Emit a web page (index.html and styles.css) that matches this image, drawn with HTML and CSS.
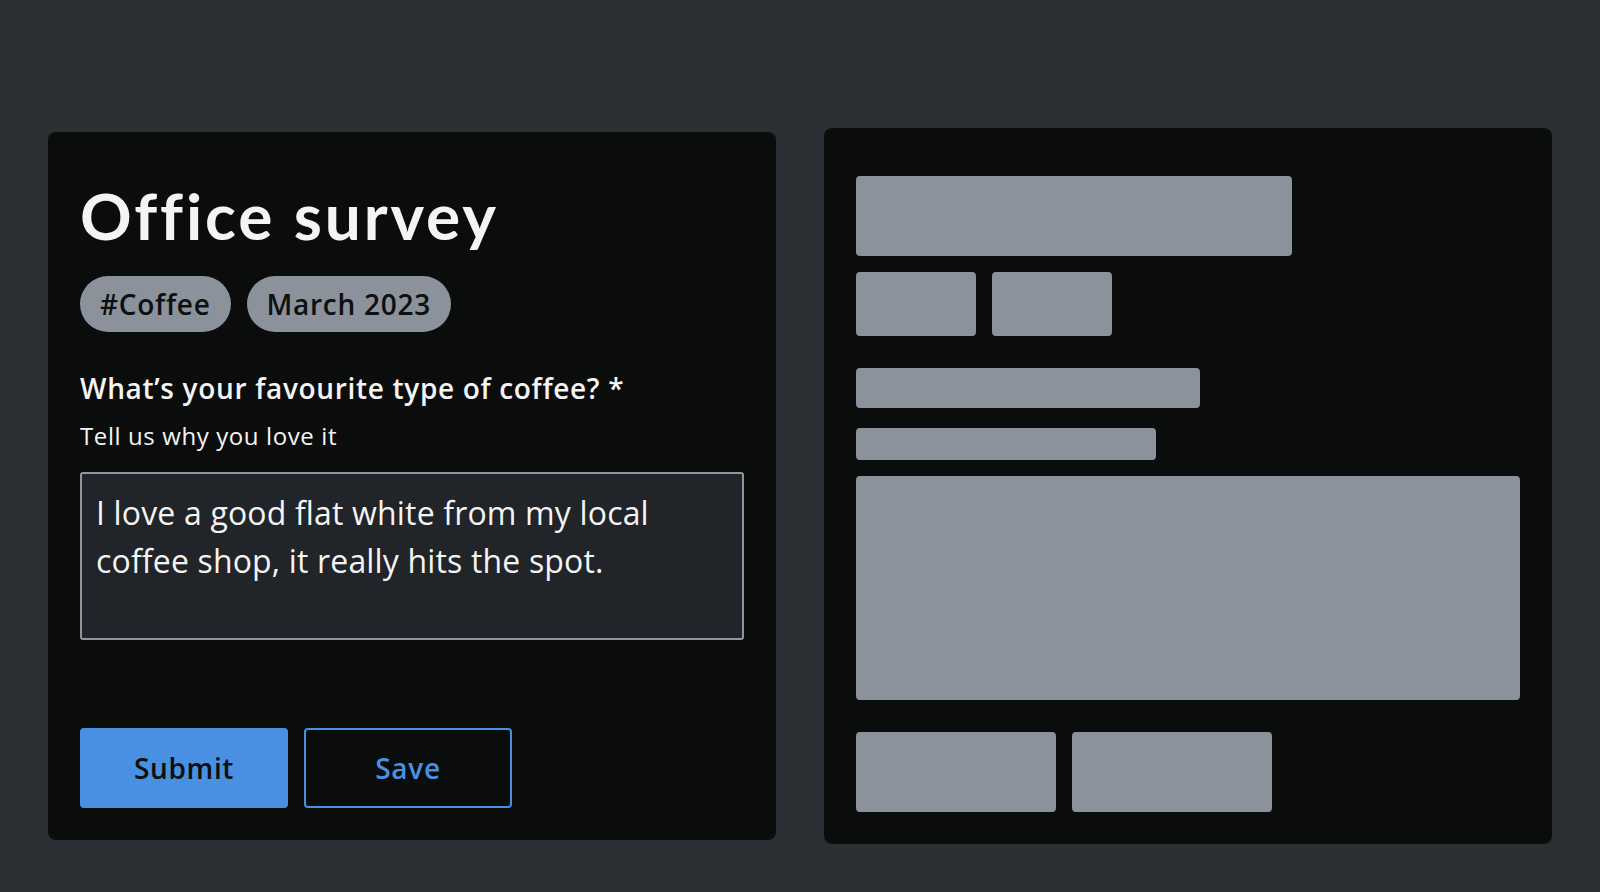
FILE: index.html
```html
<!DOCTYPE html>
<html lang="en">
<head>
<meta charset="utf-8">
<title>Office survey</title>
<link rel="stylesheet" href="styles.css">
</head>
<body>
<main class="stage">
  <section class="card form-card">
    <h1 class="title">Office survey</h1>
    <div class="tags">
      <span class="tag">#Coffee</span>
      <span class="tag">March 2023</span>
    </div>
    <label class="question" for="answer">What’s your favourite type of coffee? *</label>
    <p class="hint">Tell us why you love it</p>
    <textarea id="answer" class="answer">I love a good flat white from my local coffee shop, it really hits the spot.</textarea>
    <div class="actions">
      <button class="btn btn-primary" type="button">Submit</button>
      <button class="btn btn-outline" type="button">Save</button>
    </div>
  </section>
  <section class="card skeleton-card" aria-hidden="true">
    <div class="sk sk-title"></div>
    <div class="sk-row sk-tags">
      <div class="sk sk-tag"></div>
      <div class="sk sk-tag"></div>
    </div>
    <div class="sk sk-question"></div>
    <div class="sk sk-hint"></div>
    <div class="sk sk-area"></div>
    <div class="sk-row sk-actions">
      <div class="sk sk-btn"></div>
      <div class="sk sk-btn"></div>
    </div>
  </section>
</main>
</body>
</html>
```
FILE: styles.css
```css
* { box-sizing: border-box; }

html, body {
  margin: 0;
  height: 100%;
}

body {
  background: #2c2f34;
  color: #f4f4f4;
  font-family: "Open Sans", "Noto Sans", sans-serif;
  letter-spacing: 0.02em;
}

.stage {
  display: flex;
  align-items: center;
  gap: 48px;
  padding: 128px 48px 0;
}

.card {
  width: 728px;
  background: #0b0d0d;
  border-radius: 8px;
}

/* ---------- form card ---------- */
.form-card {
  display: flex;
  flex-direction: column;
  align-items: flex-start;
  padding: 44px 32px 32px;
}

.title {
  margin: 0;
  font-family: "Lato", "Open Sans", sans-serif;
  font-weight: 700;
  font-size: 64px;
  line-height: 80px;
  letter-spacing: 0.045em;
  color: #f4f4f4;
}

.tags {
  display: flex;
  gap: 16px;
  margin-top: 20px;
}

.tag {
  display: inline-flex;
  align-items: center;
  height: 56px;
  padding: 0 20px;
  border-radius: 28px;
  background: #8b929c;
  color: #0d0f10;
  font-size: 28px;
  font-weight: 600;
  letter-spacing: 0.026em;
}

.question {
  margin-top: 36px;
  font-size: 28px;
  font-weight: 600;
  line-height: 40px;
  letter-spacing: 0.024em;
}

.hint {
  margin: 12px 0 0;
  font-size: 24px;
  line-height: 32px;
  letter-spacing: 0.025em;
}

.answer {
  display: block;
  width: 664px;
  height: 168px;
  margin-top: 20px;
  padding: 15px 14px 12px;
  background: #212428;
  border: 2px solid #8e959f;
  border-radius: 3px;
  color: #f4f4f4;
  font-family: "Open Sans", sans-serif;
  font-size: 32px;
  line-height: 48px;
  letter-spacing: 0.005em;
  resize: none;
  outline: none;
}

.actions {
  display: flex;
  gap: 16px;
  margin-top: 88px;
}

.btn {
  width: 208px;
  height: 80px;
  border-radius: 4px;
  font-family: "Open Sans", sans-serif;
  font-size: 28px;
  font-weight: 600;
  letter-spacing: 0.024em;
  cursor: pointer;
}

.btn-primary {
  background: #4a90e2;
  border: none;
  color: #0d0f10;
}

.btn-outline {
  background: transparent;
  border: 2px solid #4a90e2;
  color: #4a90e2;
}

/* ---------- skeleton card ---------- */
.skeleton-card {
  display: flex;
  flex-direction: column;
  align-items: flex-start;
  padding: 48px 32px 32px;
}

.sk {
  background: #8b929c;
  border-radius: 4px;
}

.sk-row {
  display: flex;
  gap: 16px;
}

.sk-title { width: 436px; height: 80px; }
.sk-tags { margin-top: 16px; }
.sk-tag { width: 120px; height: 64px; }
.sk-question { width: 344px; height: 40px; margin-top: 32px; }
.sk-hint { width: 300px; height: 32px; margin-top: 20px; }
.sk-area { width: 664px; height: 224px; margin-top: 16px; }
.sk-actions { margin-top: 32px; }
.sk-btn { width: 200px; height: 80px; }
```
